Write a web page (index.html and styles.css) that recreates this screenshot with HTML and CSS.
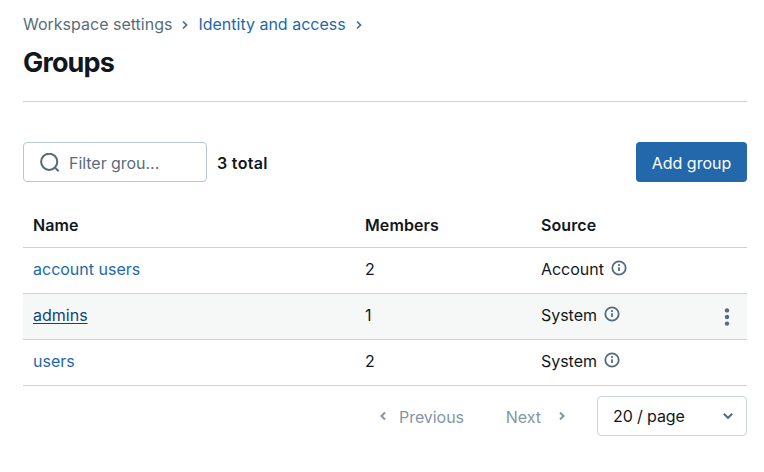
FILE: index.html
```html
<!DOCTYPE html>
<html lang="en">
<head>
<meta charset="utf-8">
<title>Groups</title>
<link rel="stylesheet" href="styles.css">
</head>
<body>
<svg class="sprite" aria-hidden="true">
  <symbol id="chevron-right" viewBox="0 0 8 10"><path d="M2 1.5 5.5 5 2 8.5"/></symbol>
  <symbol id="info" viewBox="0 0 16 16"><circle cx="8" cy="8" r="6.7"/><path d="M8 7.2v3.8"/><circle class="dot" cx="8" cy="5.1" r="1.1"/></symbol>
</svg>
<main class="page">
  <nav class="breadcrumb">
    <span>Workspace settings</span>
    <svg class="chev"><use href="#chevron-right"/></svg>
    <a href="#">Identity and access</a>
    <svg class="chev"><use href="#chevron-right"/></svg>
  </nav>
  <h1 class="title">Groups</h1>
  <section class="toolbar">
    <div class="search">
      <svg class="search-icon" viewBox="0 0 20 20"><circle cx="9.2" cy="8.8" r="8.1"/><path d="m14.8 14.4 3.8 3.8"/></svg>
      <span class="placeholder">Filter grou...</span>
    </div>
    <strong class="total">3 total</strong>
    <button class="add">Add group</button>
  </section>
  <section class="table">
    <div class="row head"><span>Name</span><span>Members</span><span>Source</span></div>
    <div class="row"><a class="link" href="#">account users</a><span>2</span><span class="source">Account<svg class="info"><use href="#info"/></svg></span></div>
    <div class="row hover"><a class="link" href="#">admins</a><span>1</span><span class="source">System<svg class="info"><use href="#info"/></svg></span>
      <svg class="more" viewBox="0 0 6 18"><circle cx="3" cy="2.4" r="2.2"/><circle cx="3" cy="9" r="2.2"/><circle cx="3" cy="15.6" r="2.2"/></svg></div>
    <div class="row"><a class="link" href="#">users</a><span>2</span><span class="source">System<svg class="info"><use href="#info"/></svg></span></div>
  </section>
  <footer class="pager">
    <span class="prev"><svg class="arrow flip"><use href="#chevron-right"/></svg>Previous</span>
    <span class="next">Next<svg class="arrow"><use href="#chevron-right"/></svg></span>
    <div class="select"><span>20 / page</span><svg class="caret" viewBox="0 0 12 8"><path d="M1.8 1.8 6 5.8l4.2-4"/></svg></div>
  </footer>
</main>
</body>
</html>
```
FILE: styles.css
```css
* { box-sizing: border-box; }
body {
  margin: 0;
  background: #fff;
  color: #11171c;
  font: 16px/20px Inter, "Liberation Sans", sans-serif;
}
a { color: #2268aa; text-decoration: none; }
svg { flex: none; fill: none; stroke: #566b7c; }
.sprite { display: none; }
.page { padding: 14px 17px 0 23px; }
.breadcrumb { display: flex; align-items: center; height: 20px; color: #586d7b; }
.chev { width: 8px; height: 10px; margin: 2px 9px 0; stroke-width: 1.7; }
.title {
  height: 68px;
  margin: 0;
  padding-top: 12px;
  border-bottom: 1px solid #cbd3da;
  font-size: 27px;
  font-weight: 700;
  line-height: 34px;
  letter-spacing: -0.85px;
}
.toolbar { display: flex; align-items: center; height: 40px; margin-top: 40px; }
.search {
  display: flex;
  align-items: center;
  width: 184px;
  height: 40px;
  padding: 2px 16px 0;
  border: 1px solid #b8c8d3;
  border-radius: 4px;
  color: #586d7b;
}
.search-icon { width: 20px; height: 20px; margin-right: 9px; stroke-width: 2; }
.placeholder { letter-spacing: -0.04px; }
.total { margin: 2px 0 0 10px; font-weight: 600; letter-spacing: 0.32px; }
.add {
  width: 111px;
  height: 40px;
  margin-left: auto;
  padding: 2px 0 0;
  border: 0;
  border-radius: 4px;
  background: #2268aa;
  color: #fff;
  font: inherit;
  white-space: nowrap;
}
.table { margin-top: 20px; }
.row {
  display: grid;
  grid-template-columns: 332px 176px 1fr 8px;
  align-items: center;
  height: 46px;
  padding: 0 15px 3px 10px;
  border-bottom: 1px solid #cbd3da;
}
.head { padding-bottom: 0; font-weight: 600; letter-spacing: 0.1px; }
.hover { background: #f6f8f8; }
.hover .link { color: #0e4578; text-decoration: underline; text-decoration-thickness: 1px; text-underline-offset: 2px; }
.link { justify-self: start; }
.source { display: flex; align-items: center; letter-spacing: -0.03px; }
.info { width: 16px; height: 16px; margin: -2px 0 0 7px; stroke-width: 1.8; }
.dot { fill: #566b7c; stroke: none; }
.more { width: 6px; height: 18px; margin-top: 4px; fill: #566b7c; stroke: none; }
.pager { display: flex; align-items: center; height: 40px; margin-top: 10px; color: #8396a5; }
.prev, .next { display: flex; align-items: center; padding-top: 2px; }
.prev { margin-left: 356px; letter-spacing: -0.05px; }
.next { margin-left: auto; }
.arrow { width: 8px; height: 10px; margin-top: -3px; stroke: #8396a5; stroke-width: 2; }
.flip { transform: scaleX(-1); margin-right: 12px; }
.next .arrow { margin-left: 17px; margin-right: 31px; }
.select {
  display: flex;
  align-items: center;
  justify-content: space-between;
  width: 150px;
  height: 40px;
  padding: 0 12px 0 15px;
  border: 1px solid #cbd3da;
  border-radius: 4px;
  color: #11171c;
  letter-spacing: -0.1px;
}
.caret { width: 12px; height: 8px; stroke-width: 2; }
```
